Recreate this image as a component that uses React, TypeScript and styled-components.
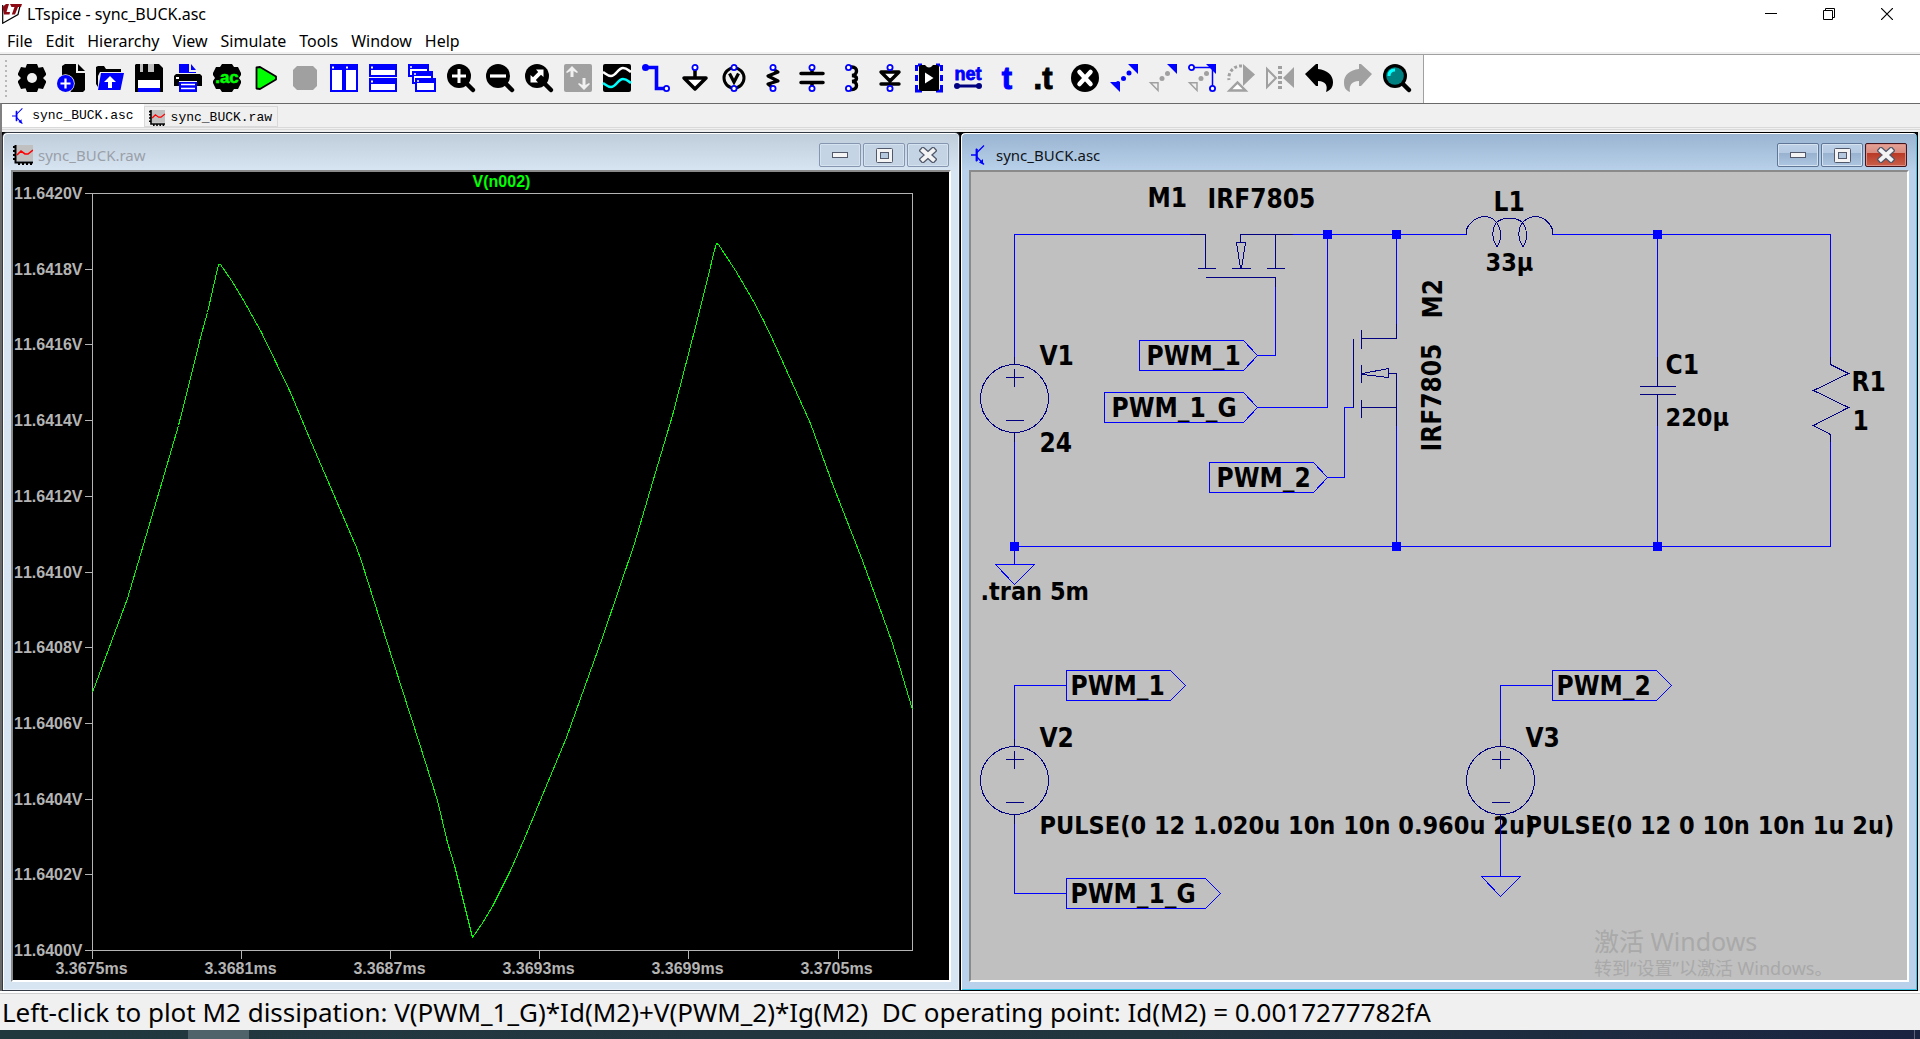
import React from 'react';
import styled, { createGlobalStyle, css } from 'styled-components';

const UI_FONT = '"Noto Sans", "Noto Sans CJK SC", sans-serif';
const FACE = '#f0f0f0';
const WIRE = '#0000ff';
const SYMBOL = '#000080';

const GlobalStyle = createGlobalStyle`
  * { box-sizing: border-box; }
  html, body, #root { height: 100%; }
  body { margin: 0; overflow: hidden; background: ${FACE}; font-family: ${UI_FONT}; color: #000; }
  button { margin: 0; padding: 0; border: 0; background: none; font: inherit; color: inherit; }
  svg { display: block; }
`;

/* ---------- application frame ---------- */

const Shell = styled.div`
  display: flex;
  flex-direction: column;
  height: 100vh;
`;

const TitleBar = styled.header`
  flex: none;
  display: flex;
  align-items: center;
  height: 28px;
  padding: 0 4px 0 2px;
  background: #fff;
`;

const AppTitle = styled.h1`
  flex: 1;
  margin: 0 0 0 5px;
  font-size: 16px;
  line-height: 20px;
  font-weight: 400;
`;

const SystemButton = styled.button`
  display: grid;
  place-items: center;
  width: 58px;
  height: 28px;
`;

const MenuBar = styled.nav`
  flex: none;
  display: flex;
  gap: 13px;
  height: 24px;
  padding-left: 7px;
  background: #fff;
`;

const MenuItem = styled.button`
  font-size: 16px;
  line-height: 26px;
  height: 24px;
`;

const ToolbarRow = styled.div`
  flex: none;
  display: flex;
  height: 51px;
  border-top: 2px solid ${FACE};
  background: #fff;
`;

const Toolbar = styled.div`
  display: flex;
  align-items: flex-start;
  gap: 11px;
  padding: 9px 12px 0 5px;
  background: ${FACE};
  border-right: 1px solid #a0a0a0;
  border-top: 1px solid #a0a0a0;
`;

const ToolbarFill = styled.div`
  flex: 1;
  border-top: 1px solid #a0a0a0;
`;

const Grip = styled.div`
  width: 2px;
  height: 38px;
  margin: -4px 0 0;
  background: repeating-linear-gradient(#b8b8b8 0 2px, transparent 2px 5px);
`;

const ToolButton = styled.button`
  width: 28px;
  height: 28px;

  svg {
    overflow: visible;
  }
`;

const TabStrip = styled.div`
  flex: none;
  display: flex;
  align-items: flex-start;
  height: 29px;
  border-top: 1px solid #696969;
  border-left: 2px solid #808080;
  background: ${FACE};
`;

const TabRow = styled.div`
  flex: 1;
  display: flex;
  align-items: flex-start;
  height: 26px;
  border-bottom: 3px double #d9d9d9;
`;

const TabButton = styled.button<{ $active?: boolean }>`
  display: flex;
  align-items: center;
  gap: 6px;
  height: 21px;
  margin-top: 2px;
  padding: 2px 5px 0 4px;
  border: 1px solid #d9d9d9;
  font-family: "Liberation Mono", monospace;
  font-size: 13px;
  line-height: 16px;
  ${(p) =>
    p.$active &&
    css`
      gap: 9px;
      height: 23px;
      margin-top: 0;
      padding: 0 10px;
      border: 0;
      background: #fff;
    `}
`;

const Workspace = styled.main`
  flex: 1;
  min-height: 0;
  display: flex;
  border-left: 2px solid #696969;
  border-right: 2px solid #e3e3e3;
  background: #000;
`;

const StatusBar = styled.footer`
  flex: none;
  height: 39px;
  border-top: 2px solid #fff;
  background: ${FACE};
`;

const StatusText = styled.output`
  display: block;
  border-top: 1px solid #d0ced0;
  padding-left: 2px;
  font-size: 26px;
  line-height: 36px;
  height: 37px;
  white-space: pre;
`;

const Taskbar = styled.div`
  flex: none;
  display: flex;
  height: 9px;
  padding: 0 5px 0 188px;
  background: linear-gradient(90deg, #22383f, #21353f 60%, #1a2340);
`;

const RunningApp = styled.div`
  width: 61px;
  background: #4f646a;
`;

const DesktopEdge = styled.div`
  width: 1px;
  margin-left: auto;
  background: #5b6577;
`;

/* ---------- child windows ---------- */

const ChildFrame = styled.section<{ $active?: boolean }>`
  flex: 1;
  min-width: 0;
  display: flex;
  flex-direction: column;
  padding: 1px 8px 8px;
  border: 1px solid ${(p) => (p.$active ? '#000' : '#333a44')};
  border-radius: 5px 5px 0 0;
  background: ${(p) =>
    p.$active
      ? 'linear-gradient(#99b4d1, #b9d1ea 38px, #b9d1ea)'
      : 'linear-gradient(#bfcddb, #d7e4f2 38px, #d7e4f2)'};
  box-shadow: ${(p) =>
    p.$active ? 'inset 1px 1px #fff, inset -1px -1px #34c5e8' : 'inset 1px 1px #fff, inset -1px -1px #e8eff8'};
`;

const ChildTitle = styled.div`
  flex: none;
  display: flex;
  align-items: center;
  gap: 2px;
  height: 36px;
  padding: 6px 2px 0;
`;

const TitleIcon = styled.span`
  display: grid;
  place-items: center start;
  width: 20px;
`;

const ChildName = styled.h2<{ $active?: boolean }>`
  flex: 1;
  margin: 0 0 0 3px;
  font-size: 15px;
  line-height: 20px;
  font-weight: 400;
  color: ${(p) => (p.$active ? '#101418' : '#9aa0a8')};
`;

const FrameButton = styled.button<{ $active?: boolean; $close?: boolean }>`
  display: grid;
  place-items: center;
  width: 42px;
  height: 24px;
  border: 1px solid ${(p) => (p.$active ? (p.$close ? '#43141b' : '#5f7696') : '#8796b0')};
  border-radius: 2px;
  box-shadow: inset 0 0 0 1px ${(p) => (p.$active && p.$close ? '#dc8f85' : '#d5e2ef')};
  background: ${(p) =>
    !p.$active
      ? '#c4d4e4'
      : p.$close
        ? 'linear-gradient(#e5a397 0, #d98a7d 43%, #b93a26 43%, #c9604a 100%)'
        : 'linear-gradient(#bdd0e6 0, #b4cae2 43%, #98b2d0 43%, #aec6e0 100%)'};
`;

const ClientArea = styled.div<{ $dark?: boolean }>`
  position: relative;
  flex: 1;
  min-height: 0;
  overflow: hidden;
  border: 2px solid;
  border-color: #8a8a8a #fff #fff #8a8a8a;
  background: ${(p) => (p.$dark ? '#000' : '#c0c0c0')};
`;

const Drawing = styled.svg`
  width: 100%;
  height: 100%;
  shape-rendering: crispEdges;
`;

const PlotText = styled.text`
  font: bold 16px/1 "Liberation Sans", sans-serif;
  font-kerning: none;
  fill: #b4b4b4;
`;

const TraceName = styled(PlotText)`
  fill: #00ff00;
`;

const Label = styled.text`
  font-family: "DejaVu Sans Condensed", "DejaVu Sans", sans-serif;
  font-weight: bold;
  font-size: 26px;
  fill: #000;
`;

const Directive = styled(Label)`
  font-size: 25px;
`;

const Watermark = styled.div`
  position: absolute;
  right: 80px;
  bottom: 0;
  width: 233px;
  color: #a9a9a9;
  white-space: nowrap;
`;

const WatermarkTitle = styled.p`
  margin: 0;
  font-size: 25px;
  line-height: 30px;
`;

const WatermarkNote = styled.p`
  margin: 0;
  font-size: 18px;
  line-height: 24px;
`;

/* ---------- small symbols ---------- */

const TransistorMark = ({ size = 20 }: { size?: number }) => (
  <svg width={size * 0.7} height={size} viewBox="0 0 14 20">
    <path d="M0 10H5M5.500 3.500V16.500M6 7.500L13 .5M6 12L13 19.500" stroke={WIRE} fill="none" strokeWidth="1.300" />
    <path d="M4.700 4H6.800V16H4.700ZM8 17.500L12 14V19.500Z" fill={WIRE} />
  </svg>
);

const WaveMark = ({ size = 20 }: { size?: number }) => (
  <svg width={size} height={size} viewBox="0 0 20 20">
    <rect x="3" width="17" height="16" fill="#c0c0c0" />
    <path d="M2.500 0V17.500H20M0 2h3M0 6h3M0 10h3M0 14h3M6 17v3M10 17v3M14 17v3M18 17v3" stroke="#000" strokeWidth="2" fill="none" />
    <path d="M4 10L8 6L12 9L15 9L20 5" stroke="#f00" strokeWidth="1.600" fill="none" />
  </svg>
);

const LtMark = () => (
  <svg width="20" height="20" viewBox="0 0 20 20">
    <path d="M.7 1V19.200L16 10.500L18 2" fill="none" stroke="#000" strokeWidth="1.200" />
    <path d="M4 0H7L4.500 8H8L7.500 10.500H2L.5 3zM8 0H20L19 3H16L13 10.500H9.800L12.500 3H9.500z" fill="#8b0a14" />
  </svg>
);

const Minimize = () => (
  <svg width="16" height="6" viewBox="0 0 16 6">
    <rect x=".5" y=".5" width="15" height="5" fill="#f4f4f4" stroke="#50586a" />
  </svg>
);
const Maximize = () => (
  <svg width="17" height="15" viewBox="0 0 17 15">
    <rect x=".5" y=".5" width="16" height="14" rx="1" fill="#f4f4f4" stroke="#50586a" />
    <rect x="4.500" y="4.500" width="8" height="6" fill="#b4c8de" stroke="#50586a" />
  </svg>
);
const Cross = () => (
  <svg width="18" height="16" viewBox="0 0 18 16">
    <path d="M4 3.500L14 12.500M14 3.500L4 12.500" stroke="#50586a" strokeWidth="6.500" strokeLinecap="square" />
    <path d="M4 3.500L14 12.500M14 3.500L4 12.500" stroke="#f4f4f4" strokeWidth="4" strokeLinecap="square" />
  </svg>
);

/* ---------- toolbar icons, each on a 28 x 28 grid ---------- */

const B = '#0000ff';
const G = '#a0a0a0';
const N = '#000080';

const Terminal = ({ x, y }: { x: number; y: number }) => (
  <circle cx={x} cy={y} r="2.600" fill="#fff" stroke={B} strokeWidth="1.800" />
);
const Lens = ({ children }: { children?: React.ReactNode }) => (
  <>
    <path d="M19 19L26 26" stroke="#000" strokeWidth="4.500" strokeLinecap="round" />
    <circle cx="12" cy="12" r="12" />
    {children}
  </>
);

const tools: { name: string; art: React.ReactNode }[] = [
  {
    name: 'Settings',
    art: (
      <>
        <path d="M9 0H19L20.500 3.800L25 3L28 9.500V11L25 14L28 17V18.500L25 25L20.500 24.200L19 28H9L7.500 24.200L3 25L0 18.500V17L3 14L0 11V9.500L3 3L7.500 3.800Z" />
        <circle cx="14" cy="14" r="5" fill={FACE} />
      </>
    ),
  },
  {
    name: 'New schematic',
    art: (
      <>
        <path d="M8 0H19V9H28V26L26 28H14L5 14V2Z" />
        <path d="M21 0L28 7H21Z" />
        <circle cx="8.500" cy="19.500" r="9.200" fill={FACE} />
        <circle cx="8.500" cy="19.500" r="8.500" fill={B} />
        <path d="M8.500 14.500V24.500M3.500 19.500H13.500" stroke="#fff" strokeWidth="2.200" />
      </>
    ),
  },
  {
    name: 'Open',
    art: (
      <>
        <path d="M0 3L2 2H8L10 5H25V8H4L2 12V23L0 20Z" />
        <path d="M5 9H28L24.500 26H2Z" fill={B} />
        <path d="M14 12L20 18H16V24H12V18H8Z" fill="#fff" />
      </>
    ),
  },
  {
    name: 'Save',
    art: (
      <>
        <path d="M1 0H24L28 4V28H0V1Z" />
        <path d="M5 0H19V8H5Z" fill="#c0c0c0" />
        <path d="M8 0H13V8H8Z" />
        <path d="M3 16H25V24H3Z" fill="#fff" />
        <path d="M3 24H25V28H3Z" fill={B} />
      </>
    ),
  },
  {
    name: 'Print',
    art: (
      <>
        <path d="M5 0H15V8H22V9H5ZM17 0L22 6H17Z" fill={B} />
        <path d="M2 10H26L28 12V22H23V17H5V22H0V12Z" />
        <path d="M2 13H5V15H2Z" fill="#fff" />
        <path d="M5 18H23V28H5Z" fill={B} />
        <path d="M7 20.500H21M7 24.500H21" stroke="#fff" strokeWidth="1.500" />
      </>
    ),
  },
  {
    name: 'Configure analysis',
    art: (
      <>
        <path d="M9 0H19L21 3H25L28 9V11L26 14L28 17V19L25 25H21L19 28H9L7 25H3L0 19V17L2 14L0 11V9L3 3H7Z" />
        <text x="14" y="19" textAnchor="middle" fontFamily="Liberation Sans, sans-serif" fontWeight="bold" fontSize="17" fill="#0f0" stroke="#0f0" strokeWidth=".5">.ac</text>
      </>
    ),
  },
  {
    name: 'Run',
    art: <path d="M4.500 3.500V24.500L8 25L24 15.500V12.500L8 3Z" fill="#0f0" stroke="#000" strokeWidth="1.800" strokeLinejoin="round" />,
  },
  { name: 'Stop', art: <path d="M6 2H22L26 6V22L22 26H6L2 22V6Z" fill={G} /> },
  {
    name: 'Tile vertically',
    art: (
      <g fill="#fff" stroke={B} strokeWidth="2">
        <path d="M1 1H13V27H1ZM15 1H27V27H15Z" />
        <path d="M0 3.500H28" strokeWidth="5" />
        <path d="M2 3.500H4M16 3.500H18" stroke="#fff" />
      </g>
    ),
  },
  {
    name: 'Tile horizontally',
    art: (
      <g fill="#fff" stroke={B} strokeWidth="2">
        <path d="M1 1H27V12H1ZM1 15H27V27H1Z" />
        <path d="M0 3.500H28M0 17.500H28" strokeWidth="5" />
        <path d="M2 3.500H4M2 17.500H4" stroke="#fff" />
      </g>
    ),
  },
  {
    name: 'Cascade windows',
    art: (
      <g fill="#fff" stroke={B} strokeWidth="2">
        <path d="M1 1H20V12H1Z" />
        <path d="M0 3H21" strokeWidth="4" />
        <path d="M5 8H24V19H5Z" />
        <path d="M4 10H25" strokeWidth="4" />
        <path d="M8 15H27V27H8Z" />
        <path d="M7 17H28" strokeWidth="4" />
        <path d="M2 3H4M6 10H8M9 17H11" stroke="#fff" strokeWidth="1.500" />
      </g>
    ),
  },
  { name: 'Zoom in', art: <Lens><path d="M12 5V19M5 12H19" stroke="#fff" strokeWidth="3" /></Lens> },
  { name: 'Zoom out', art: <Lens><path d="M4 12H20" stroke="#fff" strokeWidth="3.200" /></Lens> },
  {
    name: 'Zoom to fit',
    art: <Lens><path d="M18.500 5.500V13L16 10.800L10.800 16L13 18.500H5.500V11L8 13.200L13.200 8L11 5.500Z" fill="#fff" /></Lens>,
  },
  {
    name: 'Autorange',
    art: (
      <>
        <rect width="28" height="28" rx="2" fill={G} />
        <path d="M2 8L8 2L14 8L13 9L9.500 7V13H6.500V7L3 9ZM14 20L20 26L26 20L25 19L21.500 21V14H18.500V21L15 19Z" fill={FACE} />
      </>
    ),
  },
  {
    name: 'Pick visible traces',
    art: (
      <>
        <rect width="28" height="28" rx="2" />
        <path d="M0 8C3 10 5 12 8 12C13 12 15 4 20 4C24 4 25 6 28 8" fill="none" stroke="#fff" strokeWidth="2.600" />
        <path d="M0 19C3 21 5 23 8 23C13 23 15 15 20 15C24 15 25 17 28 19" fill="none" stroke="#0ff" strokeWidth="2.600" />
      </>
    ),
  },
  {
    name: 'Wire',
    art: (
      <>
        <path d="M3 3.500H14.500V24.500H23" fill="none" stroke={B} strokeWidth="3.600" />
        <circle cx="3.500" cy="3.500" r="3.500" fill={B} />
        <Terminal x={24.5} y={24.5} />
      </>
    ),
  },
  {
    name: 'Ground',
    art: (
      <>
        <path d="M14 4V13M3 14H25L14 25Z" fill="#fff" stroke="#000" strokeWidth="3.500" strokeLinejoin="round" />
        <Terminal x={14} y={3.5} />
      </>
    ),
  },
  {
    name: 'Voltage source',
    art: (
      <>
        <circle cx="14" cy="14" r="10" fill="none" stroke="#000" strokeWidth="3" />
        <path d="M9.500 9.500L14 18L18.500 9.500" fill="none" stroke="#000" strokeWidth="3.200" />
        <Terminal x={14} y={3.5} />
        <Terminal x={14} y={24.5} />
      </>
    ),
  },
  {
    name: 'Resistor',
    art: (
      <>
        <path d="M14 5L19 8L9 12L19 17L9 20L14 24" fill="none" stroke="#000" strokeWidth="3.200" strokeLinecap="round" strokeLinejoin="round" />
        <Terminal x={14} y={3.5} />
        <Terminal x={14} y={24.5} />
      </>
    ),
  },
  {
    name: 'Capacitor',
    art: (
      <>
        <path d="M14 4V9M14 19V24M3 9.500H25M3 18.500H25" stroke="#000" strokeWidth="3.500" strokeLinecap="round" />
        <Terminal x={14} y={3.5} />
        <Terminal x={14} y={24.5} />
      </>
    ),
  },
  {
    name: 'Inductor',
    art: (
      <>
        <path d="M13 3H15C21 3 21 11 15 11.500C21 12 21 17 15 17.500C21 17.500 21 25.500 15 25.500H13" fill="none" stroke="#000" strokeWidth="3.400" />
        <Terminal x={11.5} y={3.5} />
        <Terminal x={11.5} y={24.5} />
      </>
    ),
  },
  {
    name: 'Diode',
    art: (
      <>
        <path d="M5 8H23L14 17ZM5 20H23" fill="#fff" stroke="#000" strokeWidth="3.400" strokeLinejoin="round" strokeLinecap="round" />
        <Terminal x={14} y={3.5} />
        <Terminal x={14} y={24.5} />
      </>
    ),
  },
  {
    name: 'Component',
    art: (
      <>
        <path d="M3 1H7M1.500 1V7M1.500 11V17M1.500 21V27H7M25 1H21M26.500 1V7M26.500 11V17M26.500 21V27H21" fill="none" stroke={B} strokeWidth="3" />
        <path d="M4 2L6 1H10Q14 6 18 1H22L24 2V26L22 27H6L4 26Z" />
        <path d="M10 8.500L18.500 14L10 19.500Z" fill="#fff" />
      </>
    ),
  },
  {
    name: 'Label net',
    art: (
      <>
        <text x="14" y="16" textAnchor="middle" fontFamily="Liberation Sans, sans-serif" fontWeight="bold" fontSize="18" fill={B} stroke={B} strokeWidth=".8">net</text>
        <path d="M3 22H25" stroke={N} strokeWidth="3" />
        <circle cx="3" cy="22" r="3" fill={N} />
        <circle cx="25" cy="22" r="3" fill={N} />
      </>
    ),
  },
  {
    name: 'Text',
    art: <text x="14" y="25" textAnchor="middle" fontFamily="Liberation Sans, sans-serif" fontWeight="bold" fontSize="31" fill={B} stroke={B}>t</text>,
  },
  {
    name: 'SPICE directive',
    art: <text x="11" y="25" textAnchor="middle" fontFamily="Liberation Sans, sans-serif" fontWeight="bold" fontSize="31" stroke="#000">.t</text>,
  },
  {
    name: 'Delete',
    art: (
      <>
        <circle cx="14" cy="14" r="14" />
        <path d="M8.500 8L19.500 20M19.500 8L8.500 20" stroke="#fff" strokeWidth="4.500" strokeLinecap="round" />
      </>
    ),
  },
  {
    name: 'Move',
    art: (
      <g fill={B}>
        <path d="M18 0H28V10ZM0 18H10V28Z" />
        <circle cx="19" cy="9" r="2.500" /><circle cx="13.500" cy="14.500" r="2.500" /><circle cx="8" cy="19" r="2" />
      </g>
    ),
  },
  {
    name: 'Duplicate',
    art: (
      <g fill={G}>
        <path d="M18 0H28V10Z" fill={B} />
        <path d="M1.500 18.700H9V26.500Z" fill="none" stroke={G} strokeWidth="1.500" />
        <circle cx="18.500" cy="9.500" r="2.500" /><circle cx="13" cy="14.500" r="2.500" />
      </g>
    ),
  },
  {
    name: 'Stretch',
    art: (
      <g fill={G}>
        <path d="M18 0H28V10Z" fill={B} />
        <path d="M4 3.500H24.500V24" fill="none" stroke={B} strokeWidth="1.500" />
        <path d="M1.500 18.700H9V26.500Z" fill="none" stroke={G} strokeWidth="1.500" />
        <circle cx="18.500" cy="9.500" r="2.500" /><circle cx="13" cy="14.500" r="2.500" />
        <Terminal x={3.5} y={3.5} />
        <Terminal x={24.5} y={24.5} />
      </g>
    ),
  },
  {
    name: 'Rotate',
    art: (
      <g fill={G}>
        <path d="M16 0L28 10.500L16 22Z" />
        <path d="M15 2A12 12 0 0 0 2 16" fill="none" stroke={G} strokeWidth="3" strokeDasharray="3 2" />
        <path d="M2.500 26.500L10.500 18.500L18.500 26.500Z" fill="#fff" stroke={G} strokeWidth="2.400" />
      </g>
    ),
  },
  {
    name: 'Mirror',
    art: (
      <g fill={G}>
        <path d="M28 3V24L17 14Z" />
        <path d="M1 5V23L10 14Z" fill="none" stroke={G} strokeWidth="2" />
        <path d="M14 2V26" stroke={G} strokeWidth="4" strokeDasharray="3 2" />
      </g>
    ),
  },
  { name: 'Undo', art: <path d="M0 10L11 0H13V5C22 6 28 11 28 18C28 23 26 26 21 28C23 22 21 17 13 17V22H11Z" /> },
  { name: 'Redo', art: <path d="M28 10L17 0H15V5C6 6 0 11 0 18C0 23 1 26 6 28C5 22 7 17 15 17V22H17Z" fill={G} /> },
  {
    name: 'Find',
    art: (
      <Lens>
        <circle cx="12" cy="12" r="8.800" fill="#008080" />
        <path d="M6 12C6 8 8 6 12 6" fill="none" stroke="#0ff" strokeWidth="3" />
      </Lens>
    ),
  },
];

/* ---------- waveform plot ---------- */

const yTicks = ['11.6420V', '11.6418V', '11.6416V', '11.6414V', '11.6412V', '11.6410V', '11.6408V', '11.6406V', '11.6404V', '11.6402V', '11.6400V'];
const xTicks = ['3.3675ms', '3.3681ms', '3.3687ms', '3.3693ms', '3.3699ms', '3.3705ms'];
const trace =
  '92,692 127,598 159,490 162,480 178,425 189,382 200,337 207,312 212,290 218,264 220,264 231,280 242,298 261,332 290,392 310,440 ' +
  '356,547 361,561 393,662 419,743 437,800 447,842 454,865 467,917 472,937 481,924 492,906 510,870 524,838 566,737 602,637 634,543 ' +
  '655,472 672,415 692,338 697,319 706,283 711,262 713,253 716,243 718,244 735,270 752,299 763,320 773,341 810,423 833,486 862,560 891,640 900,669 912,709';

function WaveformPlot() {
  return (
    <Drawing viewBox="12.5 171.5 936 808" preserveAspectRatio="xMinYMin meet" role="img" aria-label="V(n002) against time">
      <g stroke="#b4b4b4" fill="none">
        <rect x="92" y="193" width="820" height="757" />
        {yTicks.map((t, i) => <path key={t} d={`M84 ${Math.round(193 + i * 75.7)}H92`} />)}
        {xTicks.map((t, i) => <path key={t} d={`M${Math.round(92 + i * 149.1)} 950V958`} />)}
      </g>
      {yTicks.map((t, i) => <PlotText key={t} x="82" y={Math.round(198 + i * 75.7)} textAnchor="end">{t}</PlotText>)}
      {xTicks.map((t, i) => <PlotText key={t} x={Math.round(91 + i * 149)} y="973" textAnchor="middle">{t}</PlotText>)}
      <TraceName x="501" y="186" textAnchor="middle">V(n002)</TraceName>
      <polyline points={trace} fill="none" stroke="#00ff00" />
    </Drawing>
  );
}

/* ---------- schematic ---------- */

const Node = ({ x, y }: { x: number; y: number }) => <rect x={x - 4.5} y={y - 4.5} width="9" height="9" fill={WIRE} stroke="none" />;

const VoltageSource = ({ x, y }: { x: number; y: number }) => (
  <g stroke={SYMBOL} fill="none">
    <circle cx={x} cy={y} r="34" />
    <path d={`M${x - 9} ${y - 21}H${x + 9}M${x} ${y - 30}V${y - 12}M${x - 9} ${y + 22}H${x + 9}M${x} ${y - 42}V${y - 34}M${x} ${y + 34}V${y + 43}`} />
  </g>
);

const Ground = ({ x, y }: { x: number; y: number }) => <path d={`M${x - 19} ${y}H${x + 20}L${x} ${y + 20}Z`} />;

const Port = ({ x, y, body, tip }: { x: number; y: number; body: number; tip: number }) => (
  <path d={`M${x} ${y - 15}H${x + body}L${x + body + tip} ${y}L${x + body} ${y + 15}H${x}Z`} />
);

function Schematic() {
  return (
    <Drawing viewBox="970.5 171.5 936 808" preserveAspectRatio="xMinYMin meet" role="img" aria-label="Synchronous buck converter schematic">
      <Label x="1147" y="206">M1</Label>
      <Label x="1207" y="207">IRF7805</Label>
      <Label x="1039" y="364">V1</Label>
      <Label x="1039" y="451">24</Label>
      <Directive x="980" y="599">.tran 5m</Directive>
      <Label transform="translate(1441 318) rotate(-90)">M2</Label>
      <Label transform="translate(1440 451) rotate(-90)">IRF7805</Label>
      <Label x="1493" y="210">L1</Label>
      <Directive x="1485" y="270">33µ</Directive>
      <Label x="1665" y="373">C1</Label>
      <Directive x="1665" y="425">220µ</Directive>
      <Label x="1851" y="390">R1</Label>
      <Label x="1852" y="429">1</Label>
      <Label x="1146" y="364">PWM_1</Label>
      <Label x="1111" y="416">PWM_1_G</Label>
      <Label x="1216" y="486">PWM_2</Label>
      <Label x="1070" y="694">PWM_1</Label>
      <Label x="1070" y="902">PWM_1_G</Label>
      <Label x="1556" y="694">PWM_2</Label>
      <Label x="1039" y="746">V2</Label>
      <Directive x="1039" y="833">PULSE(0 12 1.020u 10n 10n 0.960u 2u)</Directive>
      <Label x="1525" y="746">V3</Label>
      <Directive x="1525" y="833">PULSE(0 12 0 10n 10n 1u 2u)</Directive>

      <g stroke={WIRE} fill="none">
        <path d="M1014 356V234H1189M1014 441V564M1292 234H1466M1552 234H1830V356M1830 441V546H1014" />
        <path d="M1275 286V355H1257M1257 407H1327V234M1327 477H1344V407H1353" />
        <path d="M1396 234V323M1396 425V546M1657 234V356M1657 425V546" />
        <path d="M1014 738V685H1066M1014 823V893H1066M1500 738V685H1552M1500 823V876" />
        <Ground x={1014} y={564} />
        <Ground x={1500} y={876} />
        <Port x={1139} y={355} body={104} tip={14} />
        <Port x={1104} y={407} body={139} tip={14} />
        <Port x={1209} y={477} body={104} tip={14} />
        <Port x={1066} y={685} body={104} tip={15} />
        <Port x={1066} y={893} body={139} tip={15} />
        <Port x={1552} y={685} body={104} tip={15} />
      </g>

      <VoltageSource x={1014} y={398} />
      <VoltageSource x={1014} y={780} />
      <VoltageSource x={1500} y={780} />

      <g stroke={SYMBOL} fill="none">
        <path d="M1189 234H1205V268M1197 268H1215M1231 268H1250M1266 268H1284M1205 277H1275V286M1275 268V234M1240 242V234H1292" />
        <path d="M1236 242H1245L1241 268H1240L1236 242" />
        <path d="M1396 323V338H1361M1361 329V348M1361 364V382M1361 399V417M1353 407V338M1361 407H1396M1388 373H1396V425" />
        <path d="M1388 368V377L1362 374V373Z" />
        <path d="M1657 356V386M1639 386H1675M1639 394H1675M1657 394V425" />
        <path d="M1830 356V364L1848 373L1813 390L1848 407L1813 425L1830 434V441" />
        <path d="M1466 234V229C1470 220 1478 216 1484 216C1489 216 1494 219 1497 223C1501 231 1502 239 1496 247" />
        <path d="M1497 247C1491 239 1491 229 1496 222C1503 216 1515 216 1522 222C1527 229 1528 239 1522 247" />
        <path d="M1523 247C1517 239 1517 229 1522 222C1526 218 1531 216 1535 216C1542 216 1549 221 1552 229V234" />
      </g>

      <Node x={1327} y={234} />
      <Node x={1396} y={234} />
      <Node x={1657} y={234} />
      <Node x={1014} y={546} />
      <Node x={1396} y={546} />
      <Node x={1657} y={546} />
    </Drawing>
  );
}

function ChildWindow({ name, active, icon, children }: { name: string; active?: boolean; icon: React.ReactNode; children: React.ReactNode }) {
  return (
    <ChildFrame $active={active}>
      <ChildTitle>
        <TitleIcon>{icon}</TitleIcon>
        <ChildName $active={active}>{name}</ChildName>
        <FrameButton $active={active} aria-label="Minimize"><Minimize /></FrameButton>
        <FrameButton $active={active} aria-label="Maximize"><Maximize /></FrameButton>
        <FrameButton $active={active} $close aria-label="Close"><Cross /></FrameButton>
      </ChildTitle>
      <ClientArea $dark={!active}>{children}</ClientArea>
    </ChildFrame>
  );
}

export default function App() {
  return (
    <Shell>
      <GlobalStyle />
      <TitleBar>
        <LtMark />
        <AppTitle>LTspice - sync_BUCK.asc</AppTitle>
        <SystemButton aria-label="Minimize">
          <svg width="12" height="12" viewBox="0 0 12 12"><path d="M0 5.500H12" stroke="#000" /></svg>
        </SystemButton>
        <SystemButton aria-label="Restore">
          <svg width="12" height="12" viewBox="0 0 12 12"><path d="M.5 2.500H9.500V11.500H.5ZM2.500 2.500V.5H11.500V9.500H9.500" fill="none" stroke="#000" /></svg>
        </SystemButton>
        <SystemButton aria-label="Close">
          <svg width="12" height="12" viewBox="0 0 12 12"><path d="M0 0L12 12M12 0L0 12" stroke="#000" strokeWidth="1.200" /></svg>
        </SystemButton>
      </TitleBar>
      <MenuBar aria-label="Menu">
        {['File', 'Edit', 'Hierarchy', 'View', 'Simulate', 'Tools', 'Window', 'Help'].map((m) => <MenuItem key={m}>{m}</MenuItem>)}
      </MenuBar>
      <ToolbarRow>
        <Toolbar role="toolbar" aria-label="Main">
          <Grip />
          {tools.map((t) => (
            <ToolButton key={t.name} aria-label={t.name}>
              <svg width="28" height="28" viewBox="0 0 28 28">{t.art}</svg>
            </ToolButton>
          ))}
        </Toolbar>
        <ToolbarFill />
      </ToolbarRow>
      <TabStrip>
        <TabRow role="tablist">
          <TabButton $active role="tab" aria-selected="true"><TransistorMark size={16} />sync_BUCK.asc</TabButton>
          <TabButton role="tab" aria-selected="false"><WaveMark size={16} />sync_BUCK.raw</TabButton>
        </TabRow>
      </TabStrip>
      <Workspace>
        <ChildWindow name="sync_BUCK.raw" icon={<WaveMark />}>
          <WaveformPlot />
        </ChildWindow>
        <ChildWindow name="sync_BUCK.asc" active icon={<TransistorMark />}>
          <Schematic />
          <Watermark>
            <WatermarkTitle>激活 Windows</WatermarkTitle>
            <WatermarkNote>转到“设置”以激活 Windows。</WatermarkNote>
          </Watermark>
        </ChildWindow>
      </Workspace>
      <StatusBar>
        <StatusText>Left-click to plot M2 dissipation: V(PWM_1_G)*Id(M2)+V(PWM_2)*Ig(M2)  DC operating point: Id(M2) = 0.0017277782fA</StatusText>
      </StatusBar>
      <Taskbar>
        <RunningApp />
        <DesktopEdge />
      </Taskbar>
    </Shell>
  );
}
